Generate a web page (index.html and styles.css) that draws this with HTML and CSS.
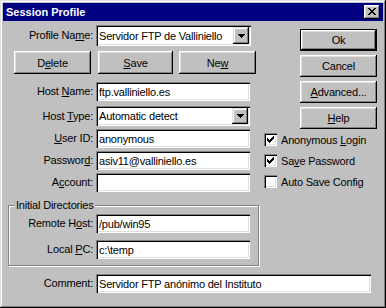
FILE: index.html
```html
<!DOCTYPE html>
<html lang="es">
<head>
    <meta charset="UTF-8">
    <title>Session Profile</title>
    <link rel="stylesheet" href="styles.css">
</head>
<body>
    <div class="window">
        <div class="titlebar">
            <span class="title">Session Profile</span>
            <span class="close">
                <svg width="8" height="7" viewBox="0 0 8 7" shape-rendering="crispEdges"><path d="M0 0h2v1H0zM6 0h2v1H6zM1 1h2v1H1zM5 1h2v1H5zM2 2h4v1H2zM3 3h2v1H3zM2 4h4v1H2zM1 5h2v1H1zM5 5h2v1H5zM0 6h2v1H0zM6 6h2v1H6z" fill="#000"/></svg>
            </span>
        </div>

        <div class="client">
            <div class="top">
                <div class="left">
                    <div class="row profile-row">
                        <label class="lbl">Profile Na<u>m</u>e:</label>
                        <div class="field combo">
                            <span class="val">Servidor FTP de Valliniello</span>
                            <span class="drop"><svg width="7" height="4" viewBox="0 0 7 4" shape-rendering="crispEdges"><path d="M0 0h7v1H0zM1 1h5v1H1zM2 2h3v1H2zM3 3h1v1H3z" fill="#000"/></svg></span>
                        </div>
                    </div>

                    <div class="actions">
                        <button class="btn btn-delete">D<u>e</u>lete</button>
                        <button class="btn btn-save"><u>S</u>ave</button>
                        <button class="btn btn-new">Ne<u>w</u></button>
                    </div>

                    <div class="row host-row">
                        <label class="lbl">Host <u>N</u>ame:</label>
                        <div class="field">ftp.valliniello.es</div>
                    </div>
                    <div class="row type-row">
                        <label class="lbl">Host <u>T</u>ype:</label>
                        <div class="field combo">
                            <span class="val">Automatic detect</span>
                            <span class="drop"><svg width="7" height="4" viewBox="0 0 7 4" shape-rendering="crispEdges"><path d="M0 0h7v1H0zM1 1h5v1H1zM2 2h3v1H2zM3 3h1v1H3z" fill="#000"/></svg></span>
                        </div>
                    </div>
                    <div class="row small-gap">
                        <label class="lbl"><u>U</u>ser ID:</label>
                        <div class="field">anonymous</div>
                    </div>
                    <div class="row small-gap">
                        <label class="lbl">Passwor<u>d</u>:</label>
                        <div class="field">asiv11@valliniello.es</div>
                    </div>
                    <div class="row small-gap">
                        <label class="lbl">A<u>c</u>count:</label>
                        <div class="field"></div>
                    </div>

                    <fieldset class="group">
                        <legend>Initial Directories</legend>
                        <div class="row">
                            <label class="lbl">Remote H<u>o</u>st:</label>
                            <div class="field">/pub/win95</div>
                        </div>
                        <div class="row local-row">
                            <label class="lbl">Local <u>P</u>C:</label>
                            <div class="field">c:\temp</div>
                        </div>
                    </fieldset>
                </div>

                <div class="right">
                    <button class="btn side default">Ok</button>
                    <button class="btn side">Cancel</button>
                    <button class="btn side"><u>A</u>dvanced...</button>
                    <button class="btn side"><u>H</u>elp</button>

                    <div class="checks">
                        <div class="check">
                            <span class="box"><svg width="7" height="7" viewBox="0 0 7 7" shape-rendering="crispEdges"><path d="M0 2h1v3H0zM1 3h1v3H1zM2 4h1v3H2zM3 3h1v3H3zM4 2h1v3H4zM5 1h1v3H5zM6 0h1v3H6z" fill="#000"/></svg></span>
                            <span>Anonymous <u>L</u>ogin</span>
                        </div>
                        <div class="check">
                            <span class="box"><svg width="7" height="7" viewBox="0 0 7 7" shape-rendering="crispEdges"><path d="M0 2h1v3H0zM1 3h1v3H1zM2 4h1v3H2zM3 3h1v3H3zM4 2h1v3H4zM5 1h1v3H5zM6 0h1v3H6z" fill="#000"/></svg></span>
                            <span>Sa<u>v</u>e Password</span>
                        </div>
                        <div class="check">
                            <span class="box"></span>
                            <span>Auto Save Config</span>
                        </div>
                    </div>
                </div>
            </div>

            <div class="row comment-row">
                <label class="lbl">Comment:</label>
                <div class="field wide">Servidor FTP anónimo del Instituto</div>
            </div>
        </div>
    </div>
</body>
</html>
```

FILE: styles.css
```css
* {
    box-sizing: border-box;
}

body {
    margin: 0;
    background-color: #c0c0c0;
    font-family: "Liberation Sans", Arial, sans-serif;
    font-size: 11px;
    color: #000000;
}

u {
    text-decoration: underline;
    text-underline-offset: 1px;
}

.window {
    width: 386px;
    height: 308px;
    padding: 3px;
    background-color: #c0c0c0;
    box-shadow: inset -1px -1px #000000, inset 1px 1px #dfdfdf, inset -2px -2px #808080, inset 2px 2px #ffffff;
}

.titlebar {
    height: 18px;
    background-color: #000080;
    display: flex;
    align-items: center;
    justify-content: space-between;
    padding: 0 3px 0 3px;
}

.title {
    color: #ffffff;
    font-weight: bold;
    font-size: 11px;
}

.close {
    width: 16px;
    height: 14px;
    background-color: #c0c0c0;
    display: flex;
    align-items: center;
    justify-content: center;
    box-shadow: inset -1px -1px #000000, inset 1px 1px #ffffff, inset -2px -2px #808080, inset 2px 2px #dfdfdf;
}

.close svg {
    display: block;
    margin: 0 1px 1px 0;
}

.client {
    letter-spacing: -0.2px;
}

.top {
    display: flex;
}

.left {
    width: 257px;
    flex: none;
}

/* label + field rows */
.row {
    display: flex;
    align-items: center;
}

.lbl {
    width: 93px;
    flex: none;
    text-align: right;
    padding-right: 3px;
    line-height: 13px;
}

.field {
    width: 154px;
    height: 19px;
    background-color: #ffffff;
    display: flex;
    align-items: center;
    padding: 0 3px;
    white-space: nowrap;
    box-shadow: inset 1px 1px #808080, inset 2px 2px #000000, inset -1px -1px #ffffff, inset -2px -2px #dfdfdf;
}

.field.wide {
    width: 275px;
}

.combo {
    height: 20px;
    padding: 2px 2px 2px 3px;
    justify-content: space-between;
    align-items: stretch;
}

.combo .val {
    display: flex;
    align-items: center;
}

.combo .drop {
    width: 16px;
    background-color: #c0c0c0;
    display: flex;
    align-items: center;
    justify-content: center;
    box-shadow: inset -1px -1px #000000, inset 1px 1px #dfdfdf, inset -2px -2px #808080, inset 2px 2px #ffffff;
}

.combo .drop svg {
    display: block;
}

.profile-row {
    margin-top: 4px;
}

.profile-row .combo {
    width: 155px;
    height: 21px;
}

.host-row {
    margin-top: 8px;
}

.type-row {
    margin-top: 5px;
}

.small-gap {
    margin-top: 3px;
}

/* buttons */
.btn {
    height: 23px;
    padding: 0;
    border: none;
    background-color: #c0c0c0;
    font: inherit;
    letter-spacing: inherit;
    color: #000000;
    box-shadow: inset -1px -1px #000000, inset 1px 1px #ffffff, inset -2px -2px #808080, inset 2px 2px #dfdfdf;
}

.actions {
    display: flex;
    margin: 5px 0 0 11px;
}

.btn-delete {
    width: 77px;
}

.btn-save {
    width: 75px;
    margin-left: 7px;
}

.btn-new {
    width: 77px;
    margin-left: 6px;
}

.right {
    flex: 1;
    padding-top: 8px;
    display: flex;
    flex-direction: column;
    align-items: flex-start;
}

.btn.side {
    width: 77px;
    height: 22px;
    margin-left: 40px;
    margin-bottom: 4px;
}

.btn.default {
    box-shadow: inset 0 0 0 1px #000000, inset -2px -2px #000000, inset 2px 2px #ffffff, inset -3px -3px #808080, inset 3px 3px #dfdfdf;
}

.checks {
    display: flex;
    flex-direction: column;
    gap: 8px;
    margin-left: 4px;
}

.check {
    display: flex;
    align-items: center;
    gap: 4px;
    height: 13px;
}

.box {
    width: 13px;
    height: 13px;
    background-color: #ffffff;
    padding: 3px;
    box-shadow: inset 1px 1px #808080, inset 2px 2px #000000, inset -1px -1px #ffffff, inset -2px -2px #dfdfdf;
}

.box svg {
    display: block;
}

/* Initial Directories */
.group {
    margin: 7px 0 0 5px;
    width: 251px;
    padding: 2px 0 6px 0;
    border: 1px solid #808080;
    box-shadow: inset 1px 1px #ffffff, 1px 1px 0 #ffffff;
    min-inline-size: 0;
}

.group legend {
    padding: 0 1px;
    margin-left: 6px;
    line-height: 13px;
    background-color: #c0c0c0;
}

.group .lbl {
    width: 87px;
}

.local-row {
    margin-top: 7px;
}

.comment-row {
    margin-top: 8px;
}
```
